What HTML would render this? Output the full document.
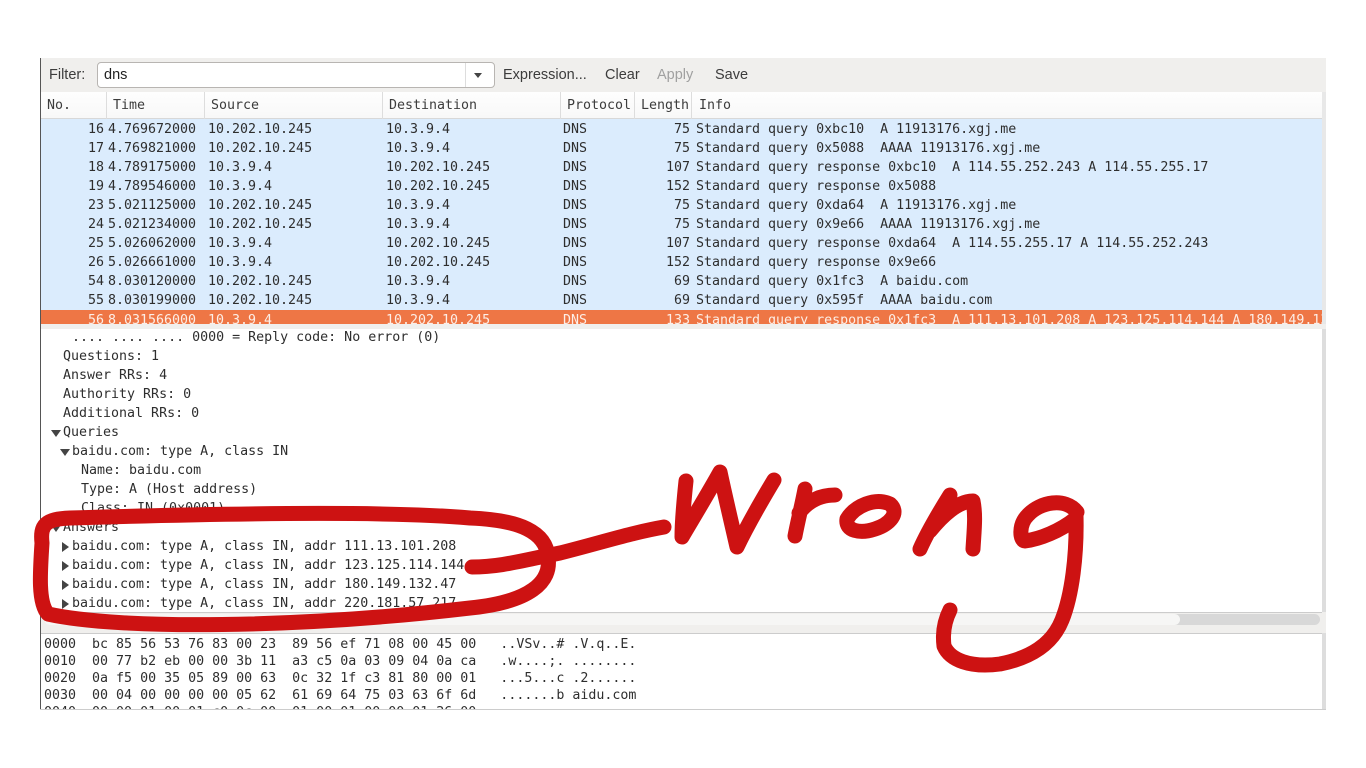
<!DOCTYPE html>
<html><head><meta charset="utf-8">
<style>
*{margin:0;padding:0;box-sizing:border-box}
body{width:1366px;height:768px;background:#fff;position:relative;overflow:hidden;font-family:"DejaVu Sans Mono","Liberation Mono",monospace;font-size:13.3px;color:#2e2e2e}
.a{position:absolute;white-space:pre;line-height:19px}
.s{font-family:"Liberation Sans","DejaVu Sans",sans-serif;font-size:14.5px}
.r{text-align:right}
.tri{position:absolute;width:0;height:0}
.dn{border-left:5px solid transparent;border-right:5px solid transparent;border-top:7px solid #444}
.rt{border-top:5px solid transparent;border-bottom:5px solid transparent;border-left:7px solid #444}
</style></head><body>
<div style="position:absolute;left:40px;top:58px;width:1286px;height:652px;background:#f0efed"></div>
<div style="position:absolute;left:40px;top:58px;width:1px;height:652px;background:#555"></div>
<div class="a s" style="left:49px;top:66px;color:#3c3c3c">Filter:</div>
<div style="position:absolute;left:97px;top:62px;width:398px;height:26px;background:#fff;border:1px solid #b8b5b2;border-radius:4px"></div>
<div style="position:absolute;left:465px;top:63px;width:1px;height:24px;background:#ddd"></div>
<div class="tri dn" style="left:474px;top:73px;border-left-width:4px;border-right-width:4px;border-top-width:5px"></div>
<div class="a s" style="left:104px;top:66px;color:#222">dns</div>
<div class="a s" style="left:503px;top:66px;color:#3c3c3c">Expression...</div>
<div class="a s" style="left:605px;top:66px;color:#3c3c3c">Clear</div>
<div class="a s" style="left:657px;top:66px;color:#a0a0a0">Apply</div>
<div class="a s" style="left:715px;top:66px;color:#3c3c3c">Save</div>
<div style="position:absolute;left:41px;top:92px;width:1281px;height:27px;background:linear-gradient(#fefefe,#f8f8f8);border-bottom:1px solid #d8d8d8"></div>
<div style="position:absolute;left:1322px;top:92px;width:4px;height:232px;background:#e8e8e8"></div>
<div style="position:absolute;left:106px;top:92px;width:1px;height:27px;background:#ddd"></div>
<div style="position:absolute;left:204px;top:92px;width:1px;height:27px;background:#ddd"></div>
<div style="position:absolute;left:382px;top:92px;width:1px;height:27px;background:#ddd"></div>
<div style="position:absolute;left:560px;top:92px;width:1px;height:27px;background:#ddd"></div>
<div style="position:absolute;left:634px;top:92px;width:1px;height:27px;background:#ddd"></div>
<div style="position:absolute;left:691px;top:92px;width:1px;height:27px;background:#ddd"></div>
<div class="a" style="left:47px;top:96px;color:#3c3c3c">No.</div>
<div class="a" style="left:113px;top:96px;color:#3c3c3c">Time</div>
<div class="a" style="left:211px;top:96px;color:#3c3c3c">Source</div>
<div class="a" style="left:389px;top:96px;color:#3c3c3c">Destination</div>
<div class="a" style="left:567px;top:96px;color:#3c3c3c">Protocol</div>
<div class="a" style="left:641px;top:96px;color:#3c3c3c;width:47px;overflow:hidden">Length</div>
<div class="a" style="left:699px;top:96px;color:#3c3c3c">Info</div>
<div style="position:absolute;left:41px;top:119px;width:1281px;height:205px;background:#dbecfd;overflow:hidden">
<div style="position:absolute;left:0;top:1px;width:1281px">
<div class="a r" style="left:0;width:63px;top:0">16<br>17<br>18<br>19<br>23<br>24<br>25<br>26<br>54<br>55</div>
<div class="a" style="left:67px;top:0">4.769672000<br>4.769821000<br>4.789175000<br>4.789546000<br>5.021125000<br>5.021234000<br>5.026062000<br>5.026661000<br>8.030120000<br>8.030199000</div>
<div class="a" style="left:167px;top:0">10.202.10.245<br>10.202.10.245<br>10.3.9.4<br>10.3.9.4<br>10.202.10.245<br>10.202.10.245<br>10.3.9.4<br>10.3.9.4<br>10.202.10.245<br>10.202.10.245</div>
<div class="a" style="left:345px;top:0">10.3.9.4<br>10.3.9.4<br>10.202.10.245<br>10.202.10.245<br>10.3.9.4<br>10.3.9.4<br>10.202.10.245<br>10.202.10.245<br>10.3.9.4<br>10.3.9.4</div>
<div class="a" style="left:522px;top:0">DNS<br>DNS<br>DNS<br>DNS<br>DNS<br>DNS<br>DNS<br>DNS<br>DNS<br>DNS</div>
<div class="a r" style="left:600px;width:49px;top:0">75<br>75<br>107<br>152<br>75<br>75<br>107<br>152<br>69<br>69</div>
<div class="a" style="left:655px;top:0">Standard query 0xbc10  A 11913176.xgj.me
Standard query 0x5088  AAAA 11913176.xgj.me
Standard query response 0xbc10  A 114.55.252.243 A 114.55.255.17
Standard query response 0x5088
Standard query 0xda64  A 11913176.xgj.me
Standard query 0x9e66  AAAA 11913176.xgj.me
Standard query response 0xda64  A 114.55.255.17 A 114.55.252.243
Standard query response 0x9e66
Standard query 0x1fc3  A baidu.com
Standard query 0x595f  AAAA baidu.com</div>
</div>
<div style="position:absolute;left:0;top:191px;width:1281px;height:19px;background:#ee7645">
<div class="a r" style="left:0;width:63px;top:1px;color:#fdeee6">56</div>
<div class="a" style="left:67px;top:1px;color:#fdeee6">8.031566000</div>
<div class="a" style="left:167px;top:1px;color:#fdeee6">10.3.9.4</div>
<div class="a" style="left:345px;top:1px;color:#fdeee6">10.202.10.245</div>
<div class="a" style="left:522px;top:1px;color:#fdeee6">DNS</div>
<div class="a r" style="left:600px;width:49px;top:1px;color:#fdeee6">133</div>
<div class="a" style="left:655px;top:1px;color:#fdeee6">Standard query response 0x1fc3  A 111.13.101.208 A 123.125.114.144 A 180.149.132.47</div>
</div>
</div>
<div style="position:absolute;left:41px;top:329px;width:1281px;height:283px;background:#fff"></div>
<div style="position:absolute;left:1322px;top:329px;width:4px;height:283px;background:#ddd"></div>
<div class="a" style="left:72px;top:328px">.... .... .... 0000 = Reply code: No error (0)</div>
<div class="a" style="left:63px;top:347px">Questions: 1
Answer RRs: 4
Authority RRs: 0
Additional RRs: 0</div>
<div class="tri dn" style="left:51px;top:430px"></div>
<div class="a" style="left:63px;top:423px">Queries</div>
<div class="tri dn" style="left:60px;top:449px"></div>
<div class="a" style="left:72px;top:442px">baidu.com: type A, class IN</div>
<div class="a" style="left:81px;top:461px">Name: baidu.com
Type: A (Host address)
Class: IN (0x0001)</div>
<div class="tri dn" style="left:51px;top:525px"></div>
<div class="a" style="left:63px;top:518px">Answers</div>
<div class="tri rt" style="left:62px;top:542px"></div>
<div class="tri rt" style="left:62px;top:561px"></div>
<div class="tri rt" style="left:62px;top:580px"></div>
<div class="tri rt" style="left:62px;top:599px"></div>
<div class="a" style="left:72px;top:537px">baidu.com: type A, class IN, addr 111.13.101.208
baidu.com: type A, class IN, addr 123.125.114.144
baidu.com: type A, class IN, addr 180.149.132.47
baidu.com: type A, class IN, addr 220.181.57.217</div>
<div style="position:absolute;left:41px;top:612px;width:1281px;height:15px;background:#f0efed;border-top:1px solid #ccc"></div>
<div style="position:absolute;left:44px;top:614px;width:1276px;height:11px;background:#d8d8d8;border-radius:6px"></div>
<div style="position:absolute;left:44px;top:614px;width:1136px;height:11px;background:#f6f6f5;border-radius:6px"></div>
<div style="position:absolute;left:41px;top:633px;width:1281px;height:77px;background:#fff;border-top:1px solid #ccc;overflow:hidden">
<div class="a" style="left:3px;top:2px;line-height:17px">0000  bc 85 56 53 76 83 00 23  89 56 ef 71 08 00 45 00   ..VSv..# .V.q..E.
0010  00 77 b2 eb 00 00 3b 11  a3 c5 0a 03 09 04 0a ca   .w....;. ........
0020  0a f5 00 35 05 89 00 63  0c 32 1f c3 81 80 00 01   ...5...c .2......
0030  00 04 00 00 00 00 05 62  61 69 64 75 03 63 6f 6d   .......b aidu.com
0040  00 00 01 00 01 c0 0c 00  01 00 01 00 00 01 26 00   ..........</div>
</div>
<div style="position:absolute;left:1322px;top:633px;width:4px;height:77px;background:#ddd"></div>
<div style="position:absolute;left:40px;top:709px;width:1286px;height:1px;background:#ccc"></div>
<svg width="1366" height="768" style="position:absolute;left:0;top:0" fill="none" stroke="#cd1212" stroke-width="15" stroke-linecap="round" stroke-linejoin="round">
<path d="M470 518 C380 510 200 514 70 518 C45 519 40 525 42 543 C40 573 38 603 48 614 C120 630 300 628 470 608 C530 602 552 582 548 557 C546 532 520 520 470 518"/>
<path d="M472 567 C500 567 520 561 560 553 C600 543 630 533 664 527"/>
<path d="M686 481 C684 500 682 520 682 537 C695 515 710 490 720 472 C726 500 732 525 737 547 C750 520 765 495 774 480"/>
<path d="M805 489 C802 505 798 520 795 536 M799 513 C808 501 820 495 835 495"/>
<path d="M890 504 C875 497 855 506 847 519 C845 531 860 534 875 529 C890 524 900 513 890 504"/>
<path d="M950 495 C940 511 928 531 920 549 M930 531 C942 516 958 501 973 501 C976 516 974 531 973 549"/>
<path d="M1077 512 C1065 497 1040 502 1028 515 C1018 525 1020 541 1025 541 C1040 539 1060 531 1075 519 M1076 515 C1077 555 1072 595 1062 620 C1052 645 1030 658 1000 664 C970 668 950 660 944 646 C942 630 946 618 950 610"/>
</svg>
</body></html>
